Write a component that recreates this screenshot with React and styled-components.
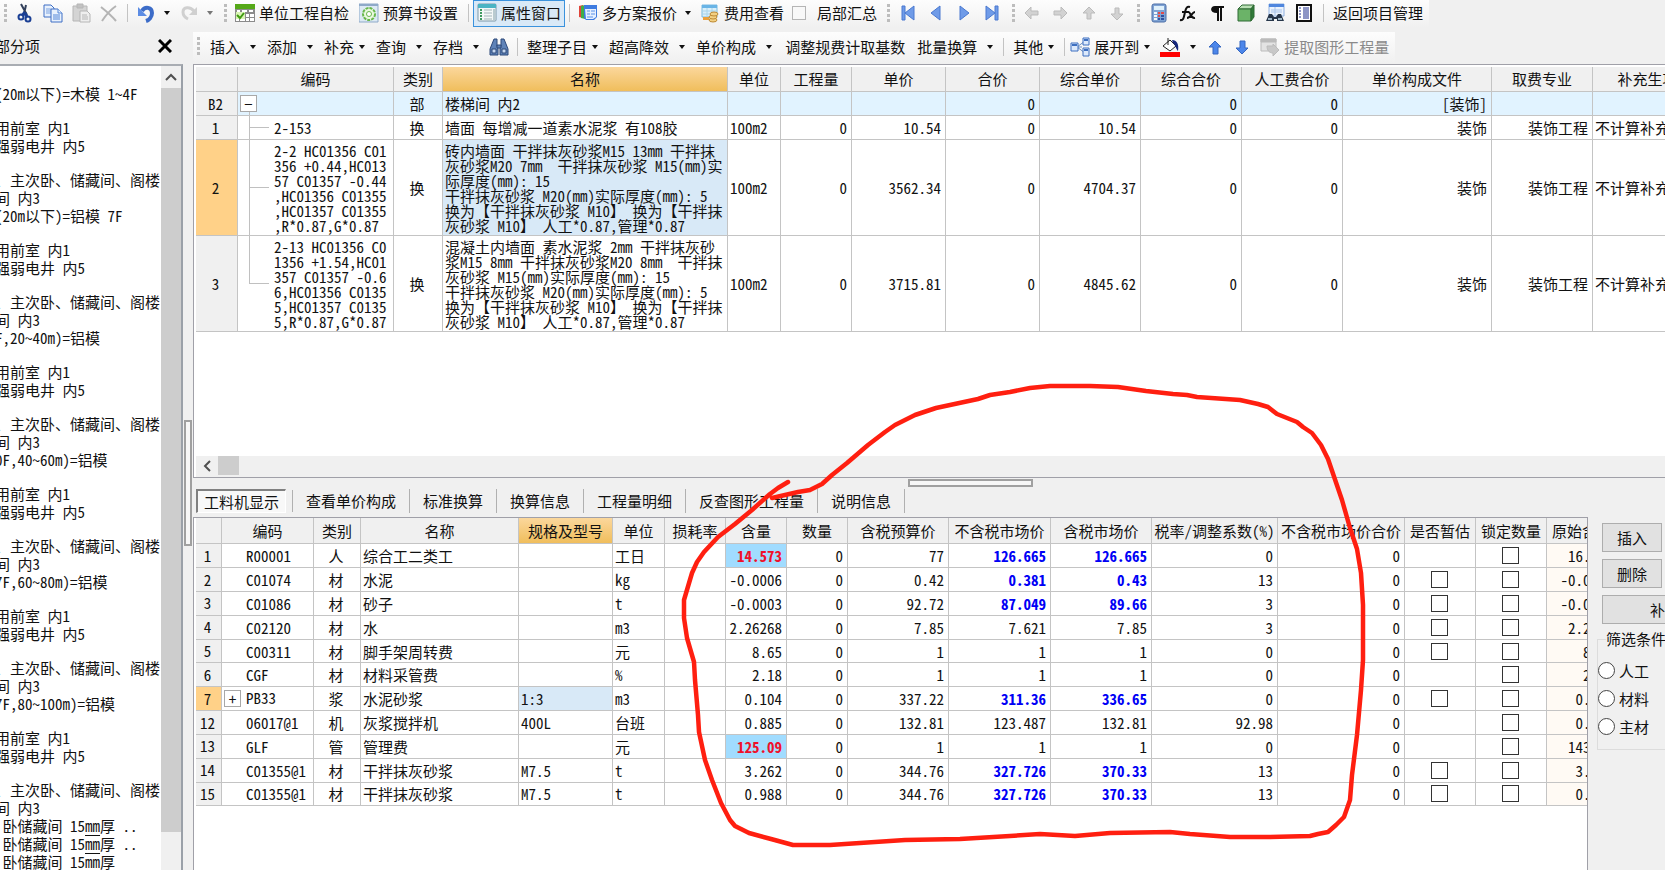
import styled, { createGlobalStyle, css } from "styled-components";

const GlobalStyle = createGlobalStyle`
  * {
    box-sizing: border-box;
  }
  html, body, #root {
    height: 100%;
    margin: 0;
  }
  body, button, input, table {
    font-family: "Noto Sans CJK SC", "Liberation Sans", sans-serif;
    font-size: 15px;
    line-height: 16px;
    font-feature-settings: "hwid" 1;
    color: #111;
  }
  button {
    border: 0;
    padding: 0;
    background: none;
    white-space: nowrap;
  }
`;

const drawings = {
  cut: (
    <g fill="none" strokeWidth="2">
      <path d="M6 1l6 11M11 2L9 11" stroke="#33415c" />
      <circle cx="6" cy="14" r="2.5" stroke="#1a3f94" />
      <circle cx="13" cy="16" r="2.5" stroke="#1a3f94" />
      <path d="M10 9l-3 4M10 10l2 4" stroke="#1a3f94" strokeWidth="3" />
    </g>
  ),
  copy: (
    <g fill="#e8f1fd" stroke="#3f6fc4">
      <path d="M1 2h7l3 3v9H1z" />
      <path d="M3 6h5M3 8h5M3 10h5" stroke="#7da3e0" />
      <path d="M8 6h7l4 4v9H8z" />
      <path d="M15 6v4h4M10 12h7M10 14h7M10 16h7" stroke="#5487d8" />
    </g>
  ),
  paste: (
    <g fill="#d4d4d4" stroke="#b6b6b6">
      <path d="M2 3h14v15H2z" />
      <path d="M6 1h6v4H6z" fill="#c2c2c2" />
      <path d="M9 8h7l3 3v8H9z" fill="#eee" />
      <path d="M11 12h5M11 14h6M11 16h6" />
    </g>
  ),
  remove: <path d="M2 4c5 4 10 8 15 14M17 3C11 7 7 12 3 18" fill="none" stroke="#b4b4b4" strokeWidth="2" />,
  undo: (
    <g>
      <path d="M6 8C9 3 16 4 16 10c0 4-3 7-6 8" fill="none" stroke="#3c6cc8" strokeWidth="4" />
      <path d="M2 4v9h9z" fill="#5c8ce4" />
    </g>
  ),
  redo: (
    <g>
      <path d="M15 8C11 3 4 4 4 9c0 4 3 6 5 7" fill="none" stroke="#d0d0d0" strokeWidth="3" />
      <path d="M18 4v8h-8z" fill="#d0d0d0" />
    </g>
  ),
  sheet: (
    <g>
      <path d="M0 1h20v18H0z" fill="#8b8b8b" />
      <path d="M0 1h20v5H0z" fill="#55a818" />
      <path d="M2 7h3v2H2zM7 7h5v2H7zM14 7h4v2h-4zM11 11h3v3h-3zM15 11h4v3h-4zM11 15h3v3h-3zM15 15h4v3h-4zM1 15h3v3H1zM5 15h5v3H5z" fill="#fff" />
      <path d="M1 9h9v7H1z" fill="#d9f5b4" />
      <path d="M2 12l3 3 4-5" fill="none" stroke="#3f9a10" strokeWidth="2" />
    </g>
  ),
  gear: (
    <g>
      <path d="M0 1h19v18H0z" fill="#dce9f4" stroke="#8ea9c8" />
      <path d="M0 1h19v2H0z" fill="#8ea9c8" />
      <circle cx="10" cy="11" r="6" fill="#e9f8de" stroke="#68b84a" strokeWidth="2" strokeDasharray="3 1" />
      <circle cx="10" cy="11" r="2.5" fill="#fff" stroke="#68b84a" />
    </g>
  ),
  props: (
    <g>
      <rect x="1" y="1" width="18" height="17" rx="1" fill="#f4f8f8" stroke="#7d98a8" />
      <path d="M1 1h18v4H1z" fill="#4bb4c4" />
      <path d="M3 7h2M3 10h2M3 13h2M3 16h2" stroke="#3f9a60" strokeWidth="2" />
      <path d="M7 7h8M7 10h8M7 13h8M7 16h8" stroke="#a3b5ba" />
      <path d="M17 6v11" stroke="#b9cbd0" strokeWidth="2" />
    </g>
  ),
  plans: (
    <g>
      <path d="M1 3l4-1v13l-4-1z" fill="#e0453a" />
      <path d="M3 3l4-1v14l-4-1z" fill="#3fae4a" />
      <path d="M6 2h13v12l-3 3H8l-2-2z" fill="#3d7be0" />
      <path d="M7 6h11v8l-3 2H8z" fill="#e6f0ff" />
      <path d="M9 8h3M13 8h4M9 11h3M13 11h4M9 14h6" stroke="#5b92e8" />
    </g>
  ),
  fees: (
    <g>
      <path d="M2 2h15v12H2z" fill="#d9effa" stroke="#7bbbe0" />
      <path d="M2 2h15v3H2z" fill="#69b4e6" />
      <path d="M2 8h15M2 11h15M7 5v9M12 5v9" stroke="#a9d4ea" />
      <path d="M3 14h6v3H3z" fill="#eba13c" />
      <g fill="#f2d083" stroke="#bd8a35">
        <ellipse cx="13" cy="17" rx="4" ry="2" />
        <ellipse cx="13" cy="14" rx="4" ry="2" />
        <ellipse cx="14" cy="11" rx="4" ry="2" />
      </g>
    </g>
  ),
  first: <path d="M4 3h3v14H4zM16 3v14L7 10z" fill="#6f9be8" stroke="#4a79d0" />,
  prev: <path d="M14 3v14L5 10z" fill="#6f9be8" stroke="#4a79d0" />,
  next: <path d="M6 3v14l9-7z" fill="#6f9be8" stroke="#4a79d0" />,
  last: <path d="M4 3v14l9-7zM13 3h3v14h-3z" fill="#6f9be8" stroke="#4a79d0" />,
  left: <path d="M2 10l6-6v4h7v4H8v4z" fill="#d2d2d2" stroke="#bbb" />,
  right: <path d="M16 10l-6-6v4H3v4h7v4z" fill="#d2d2d2" stroke="#bbb" />,
  up: <path d="M10 4l6 6h-4v6H8v-6H4z" fill="#d2d2d2" stroke="#bbb" />,
  down: <path d="M10 17l6-6h-4V5H8v6H4z" fill="#d2d2d2" stroke="#bbb" />,
  upBlue: <path d="M10 4l6 6h-3v7H8v-7H4z" fill="#4c86ea" stroke="#3566c0" />,
  downBlue: <path d="M10 17l6-6h-3V4H8v7H4z" fill="#4c86ea" stroke="#3566c0" />,
  calc: (
    <g>
      <rect x="3" y="1" width="14" height="18" rx="2" fill="#7fa3d4" stroke="#4c6fa8" />
      <path d="M5 3h10v4H5z" fill="#dff0fb" />
      <path d="M5 10h3M5 13h3M5 16h3" stroke="#f2f6fc" strokeWidth="2" />
      <path d="M9 10h2M9 13h2M12 10h3" stroke="#e04a4a" strokeWidth="2" />
      <path d="M9 16h2M12 13h3M12 16h3" stroke="#2f51a0" strokeWidth="2" />
    </g>
  ),
  fx: (
    <g fill="none" stroke="#111" strokeWidth="2">
      <path d="M2 17c4 1 4-4 5-8s2-6 5-5M4 9h7" />
      <path d="M10 9c3-1 2 7 7 6M17 9c-3 0-4 6-8 6" />
    </g>
  ),
  pilcrow: <path d="M8 3h9v2h-2v13h-2V5h-1v13h-2v-8C2 10 3 3 8 3z" fill="#111" />,
  cube: (
    <g stroke="#2f6b35">
      <path d="M2 6l4-4h12l-3 4z" fill="#b9dfb4" />
      <path d="M2 6h13v12H2z" fill="#6bb368" />
      <path d="M15 6l3-4v12l-3 4z" fill="#2f7a38" />
    </g>
  ),
  lookup: (
    <g>
      <path d="M4 1h15v12H4z" fill="#eaf2fd" stroke="#8fb0e0" />
      <path d="M4 1h15v3H4z" fill="#4f86de" />
      <path d="M6 7h11M6 9h11M10 4v8" stroke="#a9c4ea" />
      <path d="M4 11h3l2 3h2l2-3h3l3 7h-7v-2H9v2H1z" fill="#27364a" />
      <path d="M3 16h4M13 16h4" stroke="#9fb6c6" strokeWidth="2" />
    </g>
  ),
  list: (
    <g fill="#fff" stroke="#111">
      <path d="M3 2h14v16H3z" strokeWidth="2" />
      <path d="M5 5h2M5 8h2M5 11h2M5 14h2M9 5h6M9 7h6M9 9h6M9 11h6M9 13h6M9 15h6" stroke="#1c2d8c" />
    </g>
  ),
  binoculars: (
    <g fill="#5f83b8" stroke="#2c4879">
      <path d="M5 2h3v7l1 2v7H1v-6z" />
      <path d="M12 2h3l4 10v6h-8v-7l1-2z" />
      <path d="M3 12h4v4H3zM13 12h4v4h-4z" fill="#c6d8f0" />
      <path d="M8 8h4v3H8z" />
    </g>
  ),
  expand: (
    <g fill="#dce9fb" stroke="#3d6fc0">
      <path d="M7 10l8-6M7 10l8 6M7 10h5" fill="none" stroke="#6d8fc0" />
      <path d="M1 6h7v8H1zM13 1h6v7h-6zM13 11h6v8h-6z" />
      <path d="M2 8h5M14 3h4M14 13h4" strokeWidth="2" />
    </g>
  ),
  bucket: (
    <g>
      <path d="M3 9l7-6 6 6-6 5z" fill="#fff" stroke="#222" />
      <path d="M8 1v7" stroke="#222" fill="none" />
      <path d="M12 3c5 0 7 4 6 11-2-2-2-5-5-8z" fill="#16277c" />
      <path d="M0 15h20v5H0z" fill="#f00" />
    </g>
  ),
  extract: (
    <g fill="#e3e3e3" stroke="#bbb">
      <path d="M1 2h15v12H1z" />
      <path d="M1 2h15v3H1z" fill="#bbb" />
      <path d="M7 9h6V7l6 6-6 6v-3c-4 0-6-3-6-7z" fill="#c8c8c8" />
    </g>
  ),
};

const Icon = ({ name }) => (
  <svg width="20" height="20" viewBox="0 0 20 20" aria-hidden="true">
    {drawings[name]}
  </svg>
);

const IconTool = ({ name, title, disabled }) => (
  <IconButton title={title} aria-label={title} disabled={disabled}>
    <Icon name={name} />
  </IconButton>
);

const Menu = ({ label, icon, tight, title }) => (
  <ToolButton $gap={tight ? 5 : 10} aria-label={title}>
    {icon && <Icon name={icon} />}
    {label && <span>{label}</span>}
    <Caret />
  </ToolButton>
);

const TopToolbar = () => (
  <Bar>
    <Group>
      <Grip />
      <IconTool name="cut" title="剪切" />
      <IconTool name="copy" title="复制" />
      <IconTool name="paste" title="粘贴" disabled />
      <IconTool name="remove" title="删除" disabled />
      <Separator />
      <IconTool name="undo" title="撤销" />
      <Caret />
      <IconTool name="redo" title="恢复" disabled />
      <Caret $muted />
    </Group>
    <Group>
      <Grip />
      <ToolButton><Icon name="sheet" />单位工程自检</ToolButton>
      <ToolButton $padded><Icon name="gear" />预算书设置</ToolButton>
      <Separator />
      <ToolButton $active><Icon name="props" />属性窗口</ToolButton>
      <Separator />
      <ToolButton><Icon name="plans" />多方案报价</ToolButton>
      <Caret />
      <ToolButton><Icon name="fees" />费用查看</ToolButton>
      <ToolCheck>
        <input type="checkbox" />
        局部汇总
      </ToolCheck>
    </Group>
    <Group>
      <Grip />
      <IconTool name="first" title="首行" />
      <IconTool name="prev" title="上一行" />
      <IconTool name="next" title="下一行" />
      <IconTool name="last" title="末行" />
    </Group>
    <Group>
      <Grip />
      <IconTool name="left" title="左移" disabled />
      <IconTool name="right" title="右移" disabled />
      <IconTool name="up" title="上移" disabled />
      <IconTool name="down" title="下移" disabled />
    </Group>
    <Group $gap={9}>
      <Grip />
      <IconTool name="calc" title="计算器" />
      <IconTool name="fx" title="函数" />
      <IconTool name="pilcrow" title="特殊符号" />
      <IconTool name="cube" title="图元" />
      <IconTool name="lookup" title="查找" />
      <IconTool name="list" title="清单" />
      <Separator />
      <ToolButton>返回项目管理</ToolButton>
    </Group>
  </Bar>
);

const EditToolbar = () => (
  <Bar $tall>
    <EditGroup $gap={10}>
      <Grip />
      <Menu label="插入" />
      <Menu label="添加" />
      <Menu label="补充" tight />
      <Menu label="查询" />
      <Menu label="存档" />
      <IconTool name="binoculars" title="查找" />
      <Separator />
      <Menu label="整理子目" tight />
      <Menu label="超高降效" />
      <Menu label="单价构成" />
      <ToolButton $padded>调整规费计取基数</ToolButton>
      <Menu label="批量换算" />
      <Separator />
      <Menu label="其他" tight />
      <Separator />
      <Cluster>
        <Menu icon="expand" label="展开到" tight />
        <Menu icon="bucket" title="填充颜色" />
        <IconTool name="upBlue" title="上移" />
        <IconTool name="downBlue" title="下移" />
        <ToolButton disabled><Icon name="extract" />提取图形工程量</ToolButton>
      </Cluster>
    </EditGroup>
  </Bar>
);

const room = ["用前室 内1", "强弱电井 内5", "", "、主次卧、储藏间、阁楼", "间 内3"];
const notes = [
  "", "(20m以下)=木模 1~4F", "",
  ...room, "(20m以下)=铝模 7F", "",
  ...room, "F,20~40m)=铝模", "",
  ...room, "0F,40~60m)=铝模", "",
  ...room, "7F,60~80m)=铝模", "",
  ...room, "7F,80~100m)=铝模", "",
  ...room,
];

const NotesPanel = () => (
  <Dock>
    <DockHead>
      <DockTitle>部分项</DockTitle>
      <CloseButton aria-label="关闭">
        <svg width="14" height="14" viewBox="0 0 14 14">
          <path d="M1 1l12 12M13 1L1 13" stroke="#000" strokeWidth="3" />
        </svg>
      </CloseButton>
    </DockHead>
    <NotesFrame>
      <Notes>
        {notes.map((text, i) => (
          <Note key={i} $blank={!text}>{text}</Note>
        ))}
        <Note> 卧储藏间 15<u>mm</u>厚 ..</Note>
        <Note> 卧储藏间 15<u>mm</u>厚 ..</Note>
        <Note> 卧储藏间 15mm厚</Note>
      </Notes>
      <VScroll>
        <svg width="19" height="22" viewBox="0 0 19 22">
          <path d="M5 14l5-5 5 5" fill="none" stroke="#505050" strokeWidth="2" />
        </svg>
        <div />
      </VScroll>
    </NotesFrame>
  </Dock>
);

const itemColumns = [
  ["", 42], ["编码", 156], ["类别", 49], ["名称", 285], ["单位", 53], ["工程量", 71], ["单价", 94],
  ["合价", 94], ["综合单价", 101], ["综合合价", 101], ["人工费合价", 101], ["单价构成文件", 149],
  ["取费专业", 101], ["补充生项", 110],
];

const items = [
  { no: "B2", tree: "root", code: "", kind: "部", name: "楼梯间 内2", values: ["", "", "", "0", "", "0", "0", "[装饰]", "", ""] },
  { no: "1", tree: "mid", code: "2-153", kind: "换", name: "墙面 每增减一道素水泥浆 有108胶", values: ["100m2", "0", "10.54", "0", "10.54", "0", "0", "装饰", "装饰工程", "不计算补充"] },
  {
    no: "2",
    tree: "mid",
    tall: true,
    selected: true,
    code: "2-2 HC01356 C01\n356 +0.44,HC013\n57 C01357 -0.44\n,HC01356 C01355\n,HC01357 C01355\n,R*0.87,G*0.87",
    kind: "换",
    name: "砖内墙面 干拌抹灰砂浆M15 13mm 干拌抹\n灰砂浆M20 7mm  干拌抹灰砂浆 M15(mm)实\n际厚度(mm): 15\n干拌抹灰砂浆 M20(mm)实际厚度(mm): 5\n换为【干拌抹灰砂浆 M10】 换为【干拌抹\n灰砂浆 M10】 人工*0.87,管理*0.87",
    values: ["100m2", "0", "3562.34", "0", "4704.37", "0", "0", "装饰", "装饰工程", "不计算补充"],
  },
  {
    no: "3",
    tree: "last",
    tall: true,
    code: "2-13 HC01356 C0\n1356 +1.54,HC01\n357 C01357 -0.6\n6,HC01356 C0135\n5,HC01357 C0135\n5,R*0.87,G*0.87",
    kind: "换",
    name: "混凝土内墙面 素水泥浆 2mm 干拌抹灰砂\n浆M15 8mm 干拌抹灰砂浆M20 8mm  干拌抹\n灰砂浆 M15(mm)实际厚度(mm): 15\n干拌抹灰砂浆 M20(mm)实际厚度(mm): 5\n换为【干拌抹灰砂浆 M10】 换为【干拌抹\n灰砂浆 M10】 人工*0.87,管理*0.87",
    values: ["100m2", "0", "3715.81", "0", "4845.62", "0", "0", "装饰", "装饰工程", "不计算补充"],
  },
];

const ItemsTable = () => (
  <Table>
    <colgroup>
      {itemColumns.map(([name, width]) => (
        <col key={name} style={{ width }} />
      ))}
    </colgroup>
    <thead>
      <HeadRow $height={25}>
        {itemColumns.map(([name]) => (
          <Th key={name} $selected={name === "名称"}>{name}</Th>
        ))}
      </HeadRow>
    </thead>
    <tbody>
      {items.map((row) => (
        <Row key={row.no} $height={row.tall ? 96 : 24} $section={row.tree === "root"}>
          <RowHead scope="row" $selected={row.selected}>{row.no}</RowHead>
          <TreeCell $tree={row.tree}>
            {row.tree === "root" ? <Toggle aria-label="折叠">−</Toggle> : row.code}
          </TreeCell>
          <Td $align="center">{row.kind}</Td>
          <Td $fill={row.selected && "#d8e9f7"}>{row.name}</Td>
          {row.values.map((value, i) => (
            <Td key={i} $align={i === 0 || i === 9 ? "left" : "right"}>{value}</Td>
          ))}
        </Row>
      ))}
    </tbody>
  </Table>
);

const tabs = ["工料机显示", "查看单价构成", "标准换算", "换算信息", "工程量明细", "反查图形工程量", "说明信息"];

const resourceColumns = [
  ["", 26], ["编码", 92], ["类别", 47], ["名称", 158], ["规格及型号", 94], ["单位", 52], ["损耗率", 61],
  ["含量", 61], ["数量", 61], ["含税预算价", 101], ["不含税市场价", 102], ["含税市场价", 101],
  ["税率/调整系数(%)", 126], ["不含税市场价合价", 127], ["是否暂估", 71], ["锁定数量", 71], ["原始含量", 71],
];

// no, code, kind, name, spec, unit, amount, budget, net price, gross price, tax, has estimate box, original, marks
const resources = [
  ["1", "R00001", "人", "综合工二类工", "", "工日", "14.573", "77", "126.665", "126.665", "0", false, "16.751", "rb"],
  ["2", "C01074", "材", "水泥", "", "kg", "-0.0006", "0.42", "0.381", "0.43", "13", true, "-0.0006", "b"],
  ["3", "C01086", "材", "砂子", "", "t", "-0.0003", "92.72", "87.049", "89.66", "3", true, "-0.0003", "b"],
  ["4", "C02120", "材", "水", "", "m3", "2.26268", "7.85", "7.621", "7.85", "3", true, "2.2627", ""],
  ["5", "C00311", "材", "脚手架周转费", "", "元", "8.65", "1", "1", "1", "0", true, "8.65", ""],
  ["6", "CGF", "材", "材料采管费", "", "%", "2.18", "1", "1", "1", "0", false, "2.18", ""],
  ["7", "PB33", "浆", "水泥砂浆", "1:3", "m3", "0.104", "337.22", "311.36", "336.65", "0", true, "0.104", "b"],
  ["12", "06017@1", "机", "灰浆搅拌机", "400L", "台班", "0.885", "132.81", "123.487", "132.81", "92.98", false, "0.885", ""],
  ["13", "GLF", "管", "管理费", "", "元", "125.09", "1", "1", "1", "0", false, "143.78", "r"],
  ["14", "C01355@1", "材", "干拌抹灰砂浆", "M7.5", "t", "3.262", "344.76", "327.726", "370.33", "13", true, "3.262", "b"],
  ["15", "C01355@1", "材", "干拌抹灰砂浆", "M7.5", "t", "0.988", "344.76", "327.726", "370.33", "13", true, "0.988", "b"],
];

const ResourceRow = ({ row }) => {
  const [no, code, kind, name, spec, unit, amount, budget, net, gross, tax, estimate, original, marks] = row;
  const selected = no === "7";
  const priceTone = marks.includes("b") ? "#0000f5" : undefined;
  const hot = marks.includes("r");
  return (
    <Row $height={23}>
      <RowHead scope="row" $selected={selected}>{no}</RowHead>
      <CodeCell>
        {selected && <Toggle aria-label="展开">+</Toggle>}
        <span>{code}</span>
      </CodeCell>
      <Td $align="center">{kind}</Td>
      <Td>{name}</Td>
      <Td $fill={selected && "#d8e9f7"}>{spec}</Td>
      <Td>{unit}</Td>
      <Td />
      <Td $align="right" $fill={hot && "#a1dcff"} $tone={hot ? "#f0102a" : undefined}>{amount}</Td>
      <Td $align="right">0</Td>
      <Td $align="right">{budget}</Td>
      <Td $align="right" $tone={priceTone}>{net}</Td>
      <Td $align="right" $tone={priceTone}>{gross}</Td>
      <Td $align="right">{tax}</Td>
      <Td $align="right">0</Td>
      <Td $align="center">{estimate && <CheckBox type="checkbox" aria-label={`${name} 是否暂估`} />}</Td>
      <Td $align="center"><CheckBox type="checkbox" aria-label={`${name} 锁定数量`} /></Td>
      <Td $align="right" $fill="#fffaf4">{original}</Td>
    </Row>
  );
};

const ResourceTable = () => (
  <Table $height={288}>
    <colgroup>
      {resourceColumns.map(([name, width]) => (
        <col key={name} style={{ width }} />
      ))}
    </colgroup>
    <thead>
      <HeadRow $height={26}>
        {resourceColumns.map(([name]) => (
          <Th key={name} $selected={name === "规格及型号"}>{name}</Th>
        ))}
      </HeadRow>
    </thead>
    <tbody>
      {resources.map((row) => (
        <ResourceRow key={row[0]} row={row} />
      ))}
    </tbody>
  </Table>
);

const SidePanel = () => (
  <Side>
    <PushButton>插入</PushButton>
    <PushButton>删除</PushButton>
    <PushButton $wide>补充</PushButton>
    <Filter>
      <legend>筛选条件</legend>
      {["人工", "材料", "主材"].map((label) => (
        <label key={label}>
          <input type="radio" name="filter" />
          {label}
        </label>
      ))}
    </Filter>
  </Side>
);

const Markup = () => (
  <MarkupLayer width="1665" height="870" viewBox="0 0 1665 870" aria-hidden="true">
    <path
      d="M788 482L778 488L770 494L752 510L735 524L718 537L704 552L697 562L692 573L684 600V618L687 638L694 662L695 680L698 715L699 732L705 760L712 780L721 803L730 820L735 826L749 833L771 839L793 845H830L860 843L905 840L960 839L1010 836L1040 834L1075 836L1110 833L1170 832L1190 834L1230 837H1268L1310 836L1318 834L1328 832L1336 825L1344 817L1350 800L1352 775L1357 735L1361 690L1363 660V605L1361 573L1357 549L1350 528L1342 500L1328 459L1321 445L1312 433L1303 427L1297 422L1277 414L1268 407L1258 404L1240 400L1197 397L1187 395L1173 394L1146 391L1118 387L1090 386H1050L1030 388L1010 392L990 395L978 399L936 408L915 415L895 425L885 432L868 445L847 463L832 475L822 484L810 490L798 492L772 498"
      fill="none"
      stroke="#ff1f10"
      strokeWidth="4.5"
      strokeLinecap="round"
      strokeLinejoin="round"
    />
  </MarkupLayer>
);

export default function App() {
  return (
    <Window>
      <GlobalStyle />
      <TopToolbar />
      <Workspace>
        <NotesPanel />
        <VSplitter><div /></VSplitter>
        <Main>
          <EditToolbar />
          <ItemsPane>
            <ItemsTable />
            <HScroll>
              <svg width="22" height="19" viewBox="0 0 22 19">
                <path d="M14 5l-5 5 5 5" fill="none" stroke="#505050" strokeWidth="2" />
              </svg>
              <div />
            </HScroll>
          </ItemsPane>
          <HSplitter><div /></HSplitter>
          <DetailPane>
            <Tabs role="tablist">
              {tabs.map((tab, i) => (
                <Tab key={tab} role="tab" aria-selected={i === 0} $active={i === 0}>{tab}</Tab>
              ))}
            </Tabs>
            <DetailBody>
              <ResourceFrame>
                <ResourceTable />
              </ResourceFrame>
              <SidePanel />
            </DetailBody>
          </DetailPane>
        </Main>
      </Workspace>
      <Markup />
    </Window>
  );
}

const Window = styled.div`
  position: relative;
  display: flex;
  flex-direction: column;
  height: 100%;
  overflow: hidden;
  background: #f0f0f0;
`;

const Bar = styled.div`
  display: flex;
  flex: none;
  height: ${(p) => (p.$tall ? 36 : 28)}px;
  padding: ${(p) => (p.$tall ? "4px 0 1px" : "0")};
`;

const Group = styled.div`
  display: flex;
  flex: none;
  align-items: center;
  gap: ${(p) => p.$gap || 8}px;
  padding: 0 6px 2px 4px;
  background: linear-gradient(#fdfdfd, #f0f0f0);
`;

const Grip = styled.span`
  width: 3px;
  height: 19px;
  background: repeating-linear-gradient(#bdbdbd 0 3px, transparent 3px 5px);
`;

const Separator = styled.span`
  width: 1px;
  height: 18px;
  background: #c3c3c3;
`;

const Caret = styled.span`
  margin-right: 1px;
  border: solid transparent;
  border-width: 4px 3px 0;
  border-top-color: ${(p) => (p.$muted ? "#777" : "#111")};
`;

const IconButton = styled.button`
  display: flex;
`;

const EditGroup = styled(Group)`
  ${Separator}, ${IconButton} {
    margin: 0 -1px;
  }
`;

const Cluster = styled.div`
  display: flex;
  align-items: center;
  gap: 9px;
  margin-left: -4px;
`;

const ToolButton = styled.button`
  display: flex;
  align-items: center;
  gap: 4px;
  height: 27px;
  padding: 0 ${(p) => (p.$padded ? 2 : 0)}px;

  ${Caret} {
    margin-left: ${(p) => (p.$gap || 4) - 4}px;
  }
  &:disabled {
    color: #8a8a8a;
  }
  ${(p) =>
    p.$active &&
    css`
      padding: 0 3px;
      margin: 0 -4px;
      border: 1px solid #3a92dd;
      background: #d9e9f7;
    `}
`;

const ToolCheck = styled.label`
  display: flex;
  align-items: center;
  gap: 11px;

  input {
    appearance: none;
    width: 14px;
    height: 14px;
    margin: 0;
    border: 1px solid #b5b5b5;
    background: #f8f8f8;
  }
`;

const Workspace = styled.div`
  display: flex;
  flex: 1;
  min-height: 0;
`;

const Dock = styled.aside`
  display: flex;
  flex: none;
  flex-direction: column;
  width: 183px;
`;

const DockHead = styled.div`
  display: flex;
  flex: none;
  align-items: center;
  justify-content: space-between;
  height: 36px;
  padding-right: 11px;
`;

const DockTitle = styled.span`
  display: flex;
  justify-content: flex-end;
  width: 40px;
  white-space: nowrap;
`;

const CloseButton = styled.button`
  display: flex;
`;

const NotesFrame = styled.div`
  display: flex;
  flex: 1;
  min-height: 0;
  border-top: 2px solid #a9adb3;
  border-right: 2px solid #9aa0a8;
  background: #fff;
`;

const Notes = styled.div`
  flex: 1;
  min-width: 0;
  margin-left: -5px;
  padding-top: 3px;
  overflow: hidden;
`;

const Note = styled.div`
  height: ${(p) => (p.$blank ? 16 : 18)}px;
  line-height: 18px;
  white-space: pre;

  u {
    text-underline-offset: 3px;
  }
`;

const VScroll = styled.div`
  display: flex;
  flex: none;
  flex-direction: column;
  width: 20px;
  padding-bottom: 38px;
  background: #f0f0f0;

  div {
    flex: 1;
    background: #cdcdcd;
  }
`;

const VSplitter = styled.div`
  display: flex;
  flex: none;
  align-items: center;
  justify-content: center;
  width: 10px;
  padding-top: 68px;

  div {
    width: 8px;
    height: 126px;
    border: 2px solid #a0a0a0;
    background: #f7f7f7;
  }
`;

const Main = styled.main`
  display: flex;
  flex: 1;
  flex-direction: column;
  min-width: 0;
`;

const ItemsPane = styled.section`
  display: flex;
  flex: 413 1 0;
  flex-direction: column;
  min-height: 0;
  padding: 2px 0 0 2px;
  overflow: hidden;
  border: 1px solid #a0a0a8;
  border-right: 0;
  background: #fff;
`;

const HScroll = styled.div`
  display: flex;
  flex: none;
  height: 21px;
  margin-top: auto;
  padding-bottom: 2px;
  background: #f0f0f0;

  div {
    width: 21px;
    background: #cdcdcd;
  }
`;

const HSplitter = styled.div`
  display: flex;
  flex: none;
  justify-content: center;
  height: 10px;
  padding: 1px 0 1px 82px;

  div {
    width: 125px;
    border: 2px solid #a0a0a0;
    background: #f7f7f7;
  }
`;

const DetailPane = styled.section`
  display: flex;
  flex: 384 1 0;
  flex-direction: column;
  min-height: 0;
`;

const Tabs = styled.div`
  display: flex;
  flex: none;
  height: 29px;
  padding: 1px 3px 4px;
`;

const Tab = styled.button`
  padding: 0 13px;
  border-right: 1px solid #b0b0b0;

  ${(p) =>
    p.$active &&
    css`
      margin-right: 7px;
      padding: 0 6px;
      border-top: 2px solid #808080;
      border-left: 2px solid #808080;
      border-right: 1px solid #fff;
      border-bottom: 1px solid #fff;
      background: #f8f8f8;
      box-shadow: 7px 0 0 -1px #f0f0f0, 8px 0 0 -1px #b0b0b0;
    `}
`;

const DetailBody = styled.div`
  display: flex;
  flex: 1;
  min-height: 0;
`;

const ResourceFrame = styled.div`
  flex: 1;
  min-width: 0;
  padding-left: 2px;
  overflow: hidden;
  border: solid #a0a0a8;
  border-width: 1px 1px 0;
  background: #fff;
`;

const Table = styled.table`
  width: 100%;
  height: ${(p) => (p.$height ? `${p.$height}px` : "auto")};
  table-layout: fixed;
  border-spacing: 0;
`;

const HeadRow = styled.tr`
  height: ${(p) => p.$height}px;
`;

const gridLines = css`
  padding: 0 4px 0 2px;
  overflow: hidden;
  border: solid #c4c4c4;
  border-width: 0 1px 1px 0;
  white-space: pre;
`;

const Th = styled.th`
  ${gridLines}
  padding: 0;
  background: ${(p) => (p.$selected ? "linear-gradient(#fbd79c, #f0be5c)" : "#f0f0f0")};
  font-weight: 400;
`;

const Row = styled.tr`
  height: ${(p) => p.$height}px;
  background: ${(p) => (p.$section ? "#e1f3ff" : "#fff")};
`;

const RowHead = styled.th`
  ${gridLines}
  background: ${(p) => (p.$selected ? "#ffd188" : "#f0f0f0")};
  font-weight: 400;
`;

const Td = styled.td`
  ${gridLines}
  background: ${(p) => p.$fill || "transparent"};
  color: ${(p) => p.$tone || "inherit"};
  font-weight: ${(p) => (p.$tone ? 700 : 400)};
  line-height: 15px;
  text-align: ${(p) => p.$align || "left"};
`;

const trunk = {
  root: { size: "1px 50%", at: "11px 100%", arm: 0 },
  mid: { size: "1px 100%", at: "11px 0", arm: 20 },
  last: { size: "1px 50%", at: "11px 0", arm: 20 },
};

const TreeCell = styled(Td)`
  padding: 0 0 0 ${(p) => (p.$tree === "root" ? 2 : 36)}px;
  background-image: linear-gradient(#c0c0c0, #c0c0c0), linear-gradient(#c0c0c0, #c0c0c0);
  background-repeat: no-repeat;
  background-position: ${(p) => trunk[p.$tree].at}, 11px 50%;
  background-size: ${(p) => trunk[p.$tree].size}, ${(p) => trunk[p.$tree].arm}px 1px;
`;

const Toggle = styled.button`
  display: block;
  width: 17px;
  height: 17px;
  border: 1px solid #a8a8a8;
  background: #fff;
  line-height: 14px;
`;

const CodeCell = styled(Td)`
  padding: 0;

  span {
    margin-left: 24px;
  }
  ${Toggle} {
    float: left;
    margin: 0 -19px 0 2px;
  }
`;

const CheckBox = styled.input`
  appearance: none;
  display: block;
  width: 17px;
  height: 17px;
  margin: 0 auto;
  border: 1px solid #333;
  background: #fff;
`;

const Side = styled.aside`
  display: flex;
  flex: none;
  flex-direction: column;
  gap: 7px;
  width: 77px;
  padding: 6px 0 0 9px;
  overflow: hidden;
`;

const PushButton = styled.button`
  flex: none;
  width: ${(p) => (p.$wide ? 126 : 60)}px;
  height: 29px;
  margin-left: 5px;
  border: 1px solid #adadad;
  background: #e1e1e1;
`;

const Filter = styled.fieldset`
  display: flex;
  flex-direction: column;
  gap: 11px;
  width: 140px;
  min-width: 0;
  height: 119px;
  margin: 0;
  padding: 15px 0 0;
  border: 1px solid #dcdcdc;

  legend {
    margin-left: 8px;
    padding: 0;
  }
  label {
    display: flex;
    align-items: center;
    gap: 4px;
    height: 17px;
  }
  input {
    appearance: none;
    width: 17px;
    height: 17px;
    margin: 0;
    border: 1px solid #444;
    border-radius: 50%;
    background: #fff;
  }
`;

const MarkupLayer = styled.svg`
  position: absolute;
  top: 0;
  left: 0;
  pointer-events: none;
`;
